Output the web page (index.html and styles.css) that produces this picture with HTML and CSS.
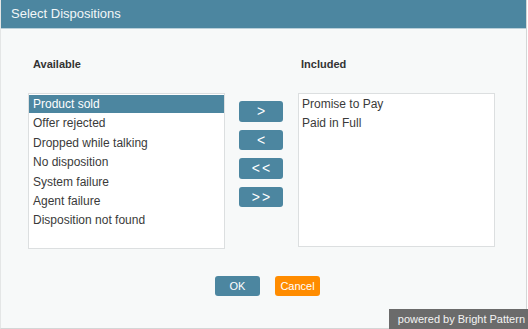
FILE: index.html
```html
<!DOCTYPE html>
<html lang="en">

<head>
    <meta charset="UTF-8">
    <meta name="viewport" content="width=device-width, initial-scale=1.0">
    <title>Select Dispositions</title>
    <link rel="stylesheet" href="styles.css">
</head>

<body>
    <div class="dialog">
        <div class="dialog-header">Select Dispositions</div>

        <div class="dialog-body">
            <div class="picker">
                <div class="picker-column">
                    <div class="picker-label">Available</div>
                    <ul class="picker-list">
                        <li class="selected">Product sold</li>
                        <li>Offer rejected</li>
                        <li>Dropped while talking</li>
                        <li>No disposition</li>
                        <li>System failure</li>
                        <li>Agent failure</li>
                        <li>Disposition not found</li>
                    </ul>
                </div>

                <div class="picker-actions">
                    <button class="btn btn-move">&gt;</button>
                    <button class="btn btn-move">&lt;</button>
                    <button class="btn btn-move">&lt;&lt;</button>
                    <button class="btn btn-move">&gt;&gt;</button>
                </div>

                <div class="picker-column">
                    <div class="picker-label picker-label-right">Included</div>
                    <ul class="picker-list picker-list-short">
                        <li>Promise to Pay</li>
                        <li>Paid in Full</li>
                    </ul>
                </div>
            </div>

            <div class="dialog-footer">
                <button class="btn btn-primary">OK</button>
                <button class="btn btn-cancel">Cancel</button>
            </div>
        </div>
    </div>

    <div class="powered-by">powered by Bright Pattern</div>
</body>

</html>
```

FILE: styles.css
```css
:root {
    --header-blue: #4c86a0;
    --panel-bg: #f7f9f9;
    --list-border: #dcdfe0;
    --text-dark: #3a3a3a;
    --accent-orange: #ff8c00;
}

* {
    margin: 0;
    padding: 0;
    box-sizing: border-box;
}

body {
    background: #ffffff;
    font-family: "Liberation Sans", Arial, sans-serif;
    color: var(--text-dark);
    width: 528px;
    height: 329px;
    overflow: hidden;
    position: relative;
}

.dialog {
    width: 527px;
    height: 329px;
    background: var(--panel-bg);
    border-right: 1px solid #d4d6d6;
    border-bottom: 1px solid #d4d6d6;
    border-left: 1px solid #e4e6e6;
    display: flex;
    flex-direction: column;
}

.dialog-header {
    height: 29px;
    background: var(--header-blue);
    border-bottom: 1px solid #b9cfd9;
    color: #f2f6f8;
    font-size: 13px;
    line-height: 28px;
    padding-left: 10px;
}

.dialog-body {
    padding: 27px 0 0 27px;
    flex: 1;
}

.picker {
    display: flex;
    gap: 14px;
}

.picker-column {
    display: flex;
    flex-direction: column;
    width: 197px;
}

.picker-label {
    font-size: 11px;
    font-weight: 700;
    color: #333;
    line-height: 15px;
    padding-left: 5px;
    margin-top: 1px;
    margin-bottom: 21px;
}

.picker-label-right {
    padding-left: 3px;
}

.picker-list {
    list-style: none;
    height: 156px;
    background: #fff;
    border: 1px solid var(--list-border);
    padding-top: 1px;
}

.picker-list-short {
    height: 154px;
}

.picker-list li {
    font-size: 12px;
    line-height: 19.4px;
    height: 19.4px;
    padding-left: 4px;
    color: var(--text-dark);
}

.picker-list-short li {
    padding-left: 3px;
}

.picker-list li.selected {
    background: var(--header-blue);
    color: #fff;
    height: 18px;
    line-height: 18px;
    margin-bottom: 1.4px;
}

.picker-actions {
    display: flex;
    flex-direction: column;
    gap: 8px;
    padding-top: 45px;
    margin-right: 1px;
}

.btn {
    border: none;
    border-radius: 3px;
    font-family: "Liberation Sans", Arial, sans-serif;
    font-size: 12px;
    color: #fff;
    cursor: pointer;
}

.btn-move {
    width: 44px;
    height: 20.5px;
    background: var(--header-blue);
    font-size: 14px;
    letter-spacing: 2px;
    padding-left: 2px;
}

.dialog-footer {
    display: flex;
    justify-content: center;
    gap: 15px;
    margin-top: 27px;
    padding-right: 19px;
}

.btn-primary,
.btn-cancel {
    width: 45px;
    height: 20px;
    font-size: 11px;
}

.btn-primary {
    background: var(--header-blue);
}

.btn-cancel {
    background: var(--accent-orange);
}

.powered-by {
    position: absolute;
    right: 0;
    bottom: 0;
    height: 20px;
    background: #6b6b6b;
    color: #f4f4f4;
    font-size: 11px;
    line-height: 20px;
    white-space: nowrap;
    padding: 0 3px 0 9px;
}
```
